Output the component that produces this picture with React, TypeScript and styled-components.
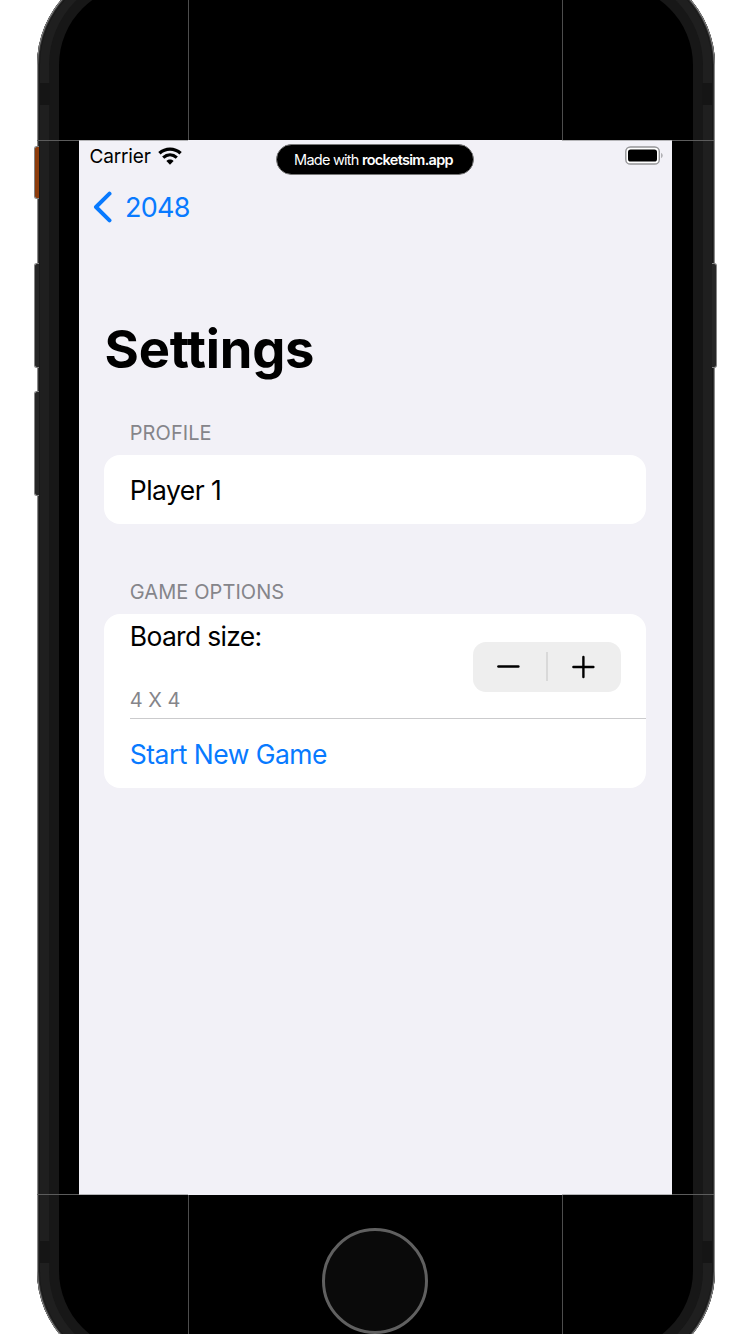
import React from "react";
import styled, { createGlobalStyle } from "styled-components";

const GlobalStyle = createGlobalStyle`
  * { box-sizing: border-box; }
  body { margin: 0; background: #fff; font-family: Inter, "Liberation Sans", sans-serif; color: #000; }
  button { font: inherit; border: 0; padding: 0; background: none; display: block; }
`;

const Stage = styled.div`
  position: relative;
  width: 750px;
  height: 1334px;
  overflow: hidden;
  background: #fff;
`;

const Body = styled.div`
  position: relative;
  width: 678px;
  height: 1406px;
  margin: -35px 0 0 36.5px;
  padding: 10px 12px;
  border-radius: 100px;
  background: #1f1f1f;
  box-shadow: inset 0 0 0 1px #8a8a8a, inset 0 0 0 2px #333, inset 0 0 0 3px #191919;
`;

const Rim = styled.div`
  height: 1386px;
  padding: 10px;
  border-radius: 90px;
  background: #171717;
`;

const Glass = styled.div`
  height: 1366px;
  border-radius: 80px;
  background: #000;
  display: flex;
  flex-direction: column;
  align-items: center;
  padding-top: 155px;
`;

const Screen = styled.main`
  width: 593px;
  height: 1055px;
  flex: none;
  background: #f2f1f7;
  display: flex;
  flex-direction: column;
`;

const HomeButton = styled.div`
  width: 106px;
  height: 106px;
  margin: 33px 1.4px 0 0;
  flex: none;
  border-radius: 50%;
  border: 3px solid #606060;
  background: #0a0a0a;
`;

const SideKey = styled.div<{ $y: number; $h: number; $right?: boolean; $accent?: boolean }>`
  position: absolute;
  top: ${(p) => p.$y}px;
  ${(p) => (p.$right ? "right: 33.5px" : "left: 33.5px")};
  width: 5px;
  height: ${(p) => p.$h}px;
  border-radius: ${(p) => (p.$right ? "0 3px 3px 0" : "3px 0 0 3px")};
  border: 1px solid #858585;
  border-${(p) => (p.$right ? "left" : "right")}: 0;
  background: ${(p) => (p.$accent ? "#8c3b0b" : "#262626")};
`;

const Antenna = styled.div<{ $y: number; $right?: boolean }>`
  position: absolute;
  top: ${(p) => p.$y}px;
  ${(p) => (p.$right ? "right: 38px" : "left: 39.5px")};
  width: 10px;
  height: 22px;
  background: #151515;
`;

const Seam = styled.div<{ $x: number; $y: number; $w: number; $h: number; $c?: string }>`
  position: absolute;
  left: ${(p) => p.$x}px;
  top: ${(p) => p.$y}px;
  width: ${(p) => p.$w}px;
  height: ${(p) => p.$h}px;
  background: ${(p) => p.$c || "#4d4d4d"};
`;

const StatusBar = styled.header`
  display: grid;
  grid-template-columns: 1fr 198px 1fr;
  height: 36px;
  padding: 4px 10.5px 0 9.5px;
`;

const CarrierGroup = styled.div`
  display: flex;
  align-items: flex-start;
  gap: 7px;
  padding-left: 1px;
`;

const Carrier = styled.span`
  font-size: 19px;
  line-height: 26px;
  letter-spacing: -0.15px;
`;

const Watermark = styled.div`
  height: 31px;
  border-radius: 16px;
  background: #000;
  color: #fff;
  font-size: 14.5px;
  line-height: 30px;
  padding-right: 3px;
  text-align: center;
  letter-spacing: -0.75px;
  white-space: nowrap;
  border: 0.5px solid #777;

  b {
    font-weight: 600;
    letter-spacing: -0.7px;
  }
`;

const BatteryBox = styled.div`
  display: flex;
  justify-content: flex-end;
  padding-top: 2px;
  margin-right: -1.5px;
`;

const NavBar = styled.nav`
  height: 62px;
  padding: 0 14px;
  display: flex;
  align-items: center;
`;

const BackButton = styled.button`
  display: flex;
  align-items: center;
  gap: 13px;
  color: #087aff;
  font-size: 27px;
  line-height: 34px;

  span {
    padding-top: 1px;
  }
`;

const Title = styled.h1`
  margin: 76px 0 0 25.5px;
  font-size: 52.5px;
  line-height: 70px;
  font-weight: 700;
  letter-spacing: -0.25px;
  font-feature-settings: "calt" 0, "liga" 0;
`;

const Section = styled.section<{ $top: number }>`
  margin: ${(p) => p.$top}px 25.7px 0 25.3px;
`;

const SectionLabel = styled.h2`
  margin: 0;
  padding-left: 25.5px;
  height: 35px;
  font-size: 20px;
  line-height: 26px;
  font-weight: 400;
  color: #85858a;
`;

const Card = styled.div`
  border-radius: 16px;
  background: #fff;
  overflow: hidden;
`;

const Row = styled.div<{ $h: number }>`
  display: flex;
  align-items: center;
  height: ${(p) => p.$h}px;
  padding: 0 25.5px;
  font-size: 26.5px;
  line-height: 34px;
`;

const BoardRow = styled.div`
  display: flex;
  justify-content: space-between;
  height: 105px;
  margin-left: 25.5px;
  padding: 5px 25.5px 0 0;
  border-bottom: 1px solid #cbcbcd;
`;

const BoardText = styled.div`
  display: flex;
  flex-direction: column;
  gap: 34px;
`;

const BoardLabel = styled.span`
  font-size: 26.5px;
  line-height: 34px;
`;

const BoardValue = styled.span`
  font-size: 20px;
  line-height: 26px;
  color: #85858a;
`;

const Stepper = styled.div`
  display: grid;
  grid-template-columns: 1fr 2px 1fr;
  align-items: center;
  width: 148px;
  height: 50px;
  margin-top: 22.5px;
  border-radius: 13px;
  background: #eee;
`;

const StepButton = styled.button`
  display: grid;
  place-items: center;
  height: 50px;
`;

const StepDivider = styled.span`
  height: 29px;
  background: #d9d9d9;
`;

const LinkButton = styled.button`
  color: #087aff;
`;

const Label = styled.span<{ $ls: number }>`
  letter-spacing: ${(p) => p.$ls}px;
`;

const WifiWrap = styled.span`
  display: flex;
  padding-top: 3px;
`;

function WifiIcon() {
  return (
    <svg width="24" height="18" viewBox="0 0 24 18" fill="none">
      <path d="M1.4 6.3C7.6 .7 16.4 .7 22.6 6.3" stroke="#000" strokeWidth="3.4" />
      <path d="M5.2 10.6C9.3 7 14.7 7 18.8 10.6" stroke="#000" strokeWidth="3.2" />
      <path d="M8.4 14C10.5 12.1 13.5 12.1 15.6 14L12 17.8Z" fill="#000" />
    </svg>
  );
}

function Battery() {
  return (
    <svg width="38" height="19" viewBox="0 0 38 19" fill="none">
      <rect x="0.8" y="1" width="33.5" height="17" rx="4.6" fill="#fff" stroke="#949497" strokeWidth="1.4" />
      <rect x="3" y="3.5" width="29" height="12" rx="2.6" fill="#000" />
      <path d="M36.3 6.8C38 8 38 11 36.3 12.2Z" fill="#949497" />
    </svg>
  );
}

export default function App() {
  return (
    <>
      <GlobalStyle />
      <Stage>
        <Body>
          <Rim>
            <Glass>
              <Screen>
                <StatusBar>
                  <CarrierGroup>
                    <Carrier>Carrier</Carrier>
                    <WifiWrap><WifiIcon /></WifiWrap>
                  </CarrierGroup>
                  <Watermark>Made with <b>rocketsim.app</b></Watermark>
                  <BatteryBox><Battery /></BatteryBox>
                </StatusBar>
                <NavBar>
                  <BackButton>
                    <svg width="19" height="32" viewBox="0 0 19 32" fill="none">
                      <path d="M16.5 2.7L3 16L16.5 29.3" stroke="#087aff" strokeWidth="4" strokeLinecap="round" strokeLinejoin="round" />
                    </svg>
                    <Label $ls={-0.75}>2048</Label>
                  </BackButton>
                </NavBar>
                <Title>Settings</Title>
                <Section $top={36}>
                  <SectionLabel><Label $ls={0.05}>PROFILE</Label></SectionLabel>
                  <Card>
                    <Row $h={69}><Label $ls={-0.55}>Player 1</Label></Row>
                  </Card>
                </Section>
                <Section $top={55}>
                  <SectionLabel><Label $ls={0.08}>GAME OPTIONS</Label></SectionLabel>
                  <Card>
                    <BoardRow>
                      <BoardText>
                        <BoardLabel><Label $ls={-0.7}>Board size:</Label></BoardLabel>
                        <BoardValue><Label $ls={0}>4 X 4</Label></BoardValue>
                      </BoardText>
                      <Stepper>
                        <StepButton aria-label="Decrease">
                          <svg width="24" height="24" viewBox="0 0 24 24" stroke="#000" strokeWidth="2.4" strokeLinecap="round">
                            <path d="M1.4 11.5H21.4" />
                          </svg>
                        </StepButton>
                        <StepDivider />
                        <StepButton aria-label="Increase">
                          <svg width="24" height="24" viewBox="0 0 24 24" stroke="#000" strokeWidth="2.4" strokeLinecap="round">
                            <path d="M1.4 12H21.4M11.4 2V22" />
                          </svg>
                        </StepButton>
                      </Stepper>
                    </BoardRow>
                    <Row $h={69}>
                      <LinkButton><Label $ls={-0.53}>Start New Game</Label></LinkButton>
                    </Row>
                  </Card>
                </Section>
              </Screen>
              <HomeButton />
            </Glass>
          </Rim>
        </Body>
        <SideKey $y={146} $h={53} $accent />
        <SideKey $y={263} $h={105} />
        <SideKey $y={391} $h={105} />
        <SideKey $y={263} $h={105} $right />
        <Antenna $y={83} />
        <Antenna $y={83} $right />
        <Antenna $y={1241} />
        <Antenna $y={1241} $right />
        <Seam $x={188} $y={0} $w={1} $h={140} />
        <Seam $x={562} $y={0} $w={1} $h={140} />
        <Seam $x={188} $y={1195} $w={1} $h={139} />
        <Seam $x={562} $y={1195} $w={1} $h={139} />
        <Seam $x={37} $y={140} $w={42} $h={1} $c="#5c5c5c" />
        <Seam $x={79} $y={140} $w={109} $h={1} $c="#b5b5b8" />
        <Seam $x={562} $y={140} $w={110} $h={1} $c="#b5b5b8" />
        <Seam $x={672} $y={140} $w={42} $h={1} $c="#5c5c5c" />
        <Seam $x={37} $y={1194} $w={42} $h={1} $c="#5c5c5c" />
        <Seam $x={79} $y={1194} $w={109} $h={1} $c="#b5b5b8" />
        <Seam $x={562} $y={1194} $w={110} $h={1} $c="#b5b5b8" />
        <Seam $x={672} $y={1194} $w={42} $h={1} $c="#5c5c5c" />
      </Stage>
    </>
  );
}
